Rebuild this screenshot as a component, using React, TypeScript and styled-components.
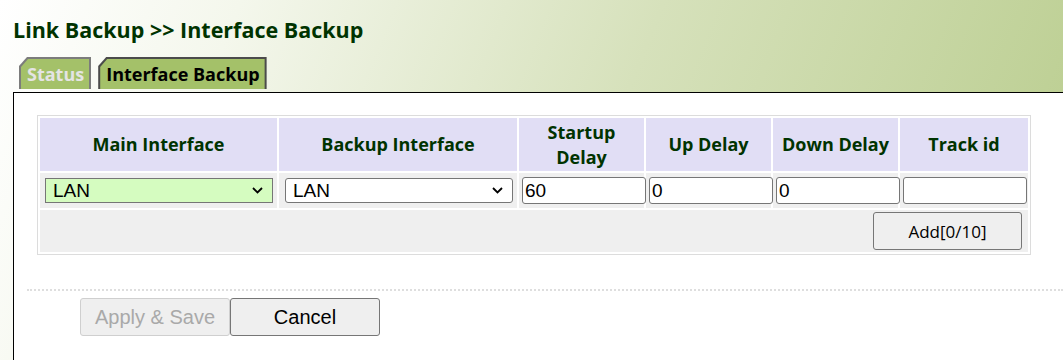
import React from "react";
import styled, { createGlobalStyle } from "styled-components";

const Global = createGlobalStyle`
  html, body { margin: 0; padding: 0; }
  body { font-family: "Open Sans", "DejaVu Sans", sans-serif; }
`;

const Page = styled.div`
  width: 1063px;
  height: 360px;
  overflow: hidden;
  background: linear-gradient(112deg, #ffffff 0%, #f4f7ec 20%, #d6e1bb 55%, #b8cc8c 100%);
  display: flex;
  flex-direction: column;
`;

const Title = styled.h1`
  margin: 0;
  padding: 17px 0 0 13px;
  height: 40px;
  box-sizing: border-box;
  font-size: 21.5px;
  line-height: 26px;
  font-weight: 700;
  color: #003300;
`;

const TabBar = styled.div`
  display: flex;
  gap: 7px;
  margin: 17px 0 0 19px;
  height: 32px;
`;

const TabEdge = styled.div<{ $active?: boolean }>`
  clip-path: polygon(0 9px, 8px 0, 100% 0, 100% 100%, 0 100%);
  background: ${(p) => (p.$active ? "#4b4b4b" : "#7c7c7c")};
  padding: 2px 2px 0 2px;
  display: flex;
`;

const TabFace = styled.div<{ $active?: boolean }>`
  clip-path: polygon(0 8px, 7px 0, 100% 0, 100% 100%, 0 100%);
  background: #a4c169;
  padding: 0 5px 0 6px;
  font-size: 18px;
  font-weight: 700;
  line-height: 30px;
  color: ${(p) => (p.$active ? "#000" : "#e4e4e4")};
`;

const Panel = styled.div`
  margin: 3px 0 0 13px;
  flex: 1;
  background: #fff;
  border-top: 1px solid #000;
  border-left: 1px solid #000;
  padding: 22px 0 0 23px;
`;

const Table = styled.table`
  width: 994px;
  table-layout: fixed;
  border: 1px solid #dcdcdc;
  border-spacing: 2px;
`;

const HeadCell = styled.th`
  background: #e1def5;
  height: 53px;
  padding: 0;
  font-size: 18px;
  font-weight: 700;
  line-height: 25px;
  color: #003300;
  text-align: center;
`;

const Cell = styled.td`
  background: #efefef;
  height: 35px;
  padding: 0;
  vertical-align: middle;
`;

const ActionCell = styled.td`
  background: #efefef;
  height: 42px;
  padding: 0 6px 0 0;
  vertical-align: middle;
`;

const ActionRow = styled.div`
  display: flex;
  justify-content: flex-end;
`;

const SelectWrap = styled.div<{ $lead: number }>`
  position: relative;
  margin-left: ${(p) => p.$lead}px;
  width: 228px;
`;

const Select = styled.select<{ $hl?: boolean }>`
  appearance: none;
  display: block;
  width: 100%;
  height: 25px;
  box-sizing: border-box;
  margin: 0;
  padding: 0 0 0 7px;
  font-family: "Liberation Sans", Arial, sans-serif;
  font-size: 19px;
  color: #000;
  background: ${(p) => (p.$hl ? "#d5fcc0" : "#fff")};
  border: 1px solid #767676;
  border-radius: ${(p) => (p.$hl ? 0 : 3)}px;
`;

const Chevron = styled.svg`
  position: absolute;
  right: 10px;
  top: 9px;
  width: 11px;
  height: 7px;
  pointer-events: none;
`;

const Field = styled.input`
  display: block;
  width: 124px;
  height: 27px;
  box-sizing: border-box;
  margin: 0 0 0 3px;
  padding: 0 2px;
  font-family: "Liberation Sans", Arial, sans-serif;
  font-size: 19px;
  color: #000;
  background: #fff;
  border: 1px solid #767676;
  border-radius: 3px;
`;

const AddButton = styled.button`
  display: block;
  width: 149px;
  height: 38px;
  font-family: "Open Sans", sans-serif;
  font-size: 17px;
  color: #000;
  background: #efefef;
  border: 1px solid #767676;
  border-radius: 3px;
`;

const Divider = styled.div`
  margin: 34px 0 0 -10px;
  border-top: 2px dotted #dedede;
`;

const Actions = styled.div`
  display: flex;
  margin: 7px 0 0 43px;
`;

const FormButton = styled.button<{ $disabled?: boolean }>`
  width: 150px;
  height: 38px;
  font-family: "Liberation Sans", Arial, sans-serif;
  font-size: 20px;
  color: ${(p) => (p.$disabled ? "#a9a9a9" : "#000")};
  background: #efefef;
  border: 1px solid ${(p) => (p.$disabled ? "#cfcfcf" : "#767676")};
  border-radius: 3px;
  padding: 0;
`;

const ChevronIcon = () => (
  <Chevron viewBox="0 0 11 7">
    <path d="M1 1 L5.5 5.5 L10 1" fill="none" stroke="#000" strokeWidth="1.8" />
  </Chevron>
);

export default function App() {
  return (
    <>
      <Global />
      <Page>
        <Title>Link Backup &gt;&gt; Interface Backup</Title>
        <TabBar>
          <TabEdge>
            <TabFace>Status</TabFace>
          </TabEdge>
          <TabEdge $active>
            <TabFace $active>Interface Backup</TabFace>
          </TabEdge>
        </TabBar>
        <Panel>
          <Table>
            <colgroup>
              <col style={{ width: 237 }} />
              <col style={{ width: 238 }} />
              <col style={{ width: 125 }} />
              <col style={{ width: 125 }} />
              <col style={{ width: 125 }} />
              <col style={{ width: 128 }} />
            </colgroup>
            <thead>
              <tr>
                <HeadCell>Main Interface</HeadCell>
                <HeadCell>Backup Interface</HeadCell>
                <HeadCell>
                  Startup
                  <br />
                  Delay
                </HeadCell>
                <HeadCell>Up Delay</HeadCell>
                <HeadCell>Down Delay</HeadCell>
                <HeadCell>Track id</HeadCell>
              </tr>
            </thead>
            <tbody>
              <tr>
                <Cell>
                  <SelectWrap $lead={5}>
                    <Select $hl defaultValue="LAN">
                      <option>LAN</option>
                    </Select>
                    <ChevronIcon />
                  </SelectWrap>
                </Cell>
                <Cell>
                  <SelectWrap $lead={6}>
                    <Select defaultValue="LAN">
                      <option>LAN</option>
                    </Select>
                    <ChevronIcon />
                  </SelectWrap>
                </Cell>
                <Cell>
                  <Field defaultValue="60" />
                </Cell>
                <Cell>
                  <Field defaultValue="0" />
                </Cell>
                <Cell>
                  <Field defaultValue="0" />
                </Cell>
                <Cell>
                  <Field defaultValue="" />
                </Cell>
              </tr>
              <tr>
                <ActionCell colSpan={6}>
                  <ActionRow>
                    <AddButton>Add[0/10]</AddButton>
                  </ActionRow>
                </ActionCell>
              </tr>
            </tbody>
          </Table>
          <Divider />
          <Actions>
            <FormButton $disabled disabled>
              Apply &amp; Save
            </FormButton>
            <FormButton>Cancel</FormButton>
          </Actions>
        </Panel>
      </Page>
    </>
  );
}
